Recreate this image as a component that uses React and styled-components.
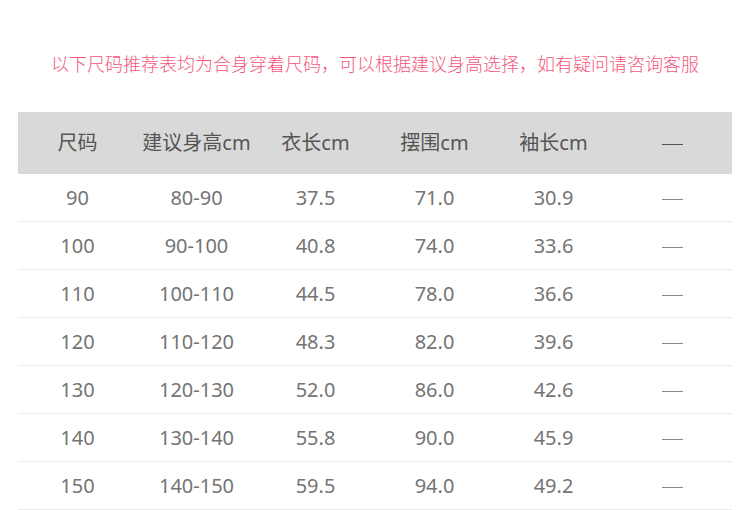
import React from "react";
import styled, { createGlobalStyle } from "styled-components";

const Global = createGlobalStyle`
  html, body { margin: 0; padding: 0; background: #fff; }
  body { font-family: "Noto Sans", "Noto Sans CJK SC", sans-serif; }
`;

const Page = styled.div`
  width: 750px;
  padding: 0 18px;
  box-sizing: border-box;
`;

const Notice = styled.div`
  padding-top: 50px;
  height: 62px;
  line-height: 26px;
  font-size: 18px;
  color: #f5567c;
  text-align: center;
  font-family: "Noto Sans CJK SC", sans-serif;
  font-weight: 300;
`;

const Table = styled.div`
  width: 714px;
`;

const Row = styled.div`
  display: grid;
  grid-template-columns: repeat(6, 1fr);
  align-items: center;
  height: ${(p) => (p.$head ? "62px" : "47px")};
  background: ${(p) => (p.$head ? "#d9d9d9" : "#fff")};
  border-bottom: ${(p) => (p.$head ? "none" : "1px solid #ececec")};
`;

const Cell = styled.div`
  text-align: center;
  font-size: 20px;
  line-height: 24px;
  color: ${(p) => (p.$head ? "#555" : "#747474")};
`;

const Dash = styled.span`
  display: inline-block;
  width: 21px;
  height: 1px;
  vertical-align: middle;
  background: ${(p) => (p.$head ? "#555" : "#888")};
`;

const headers = ["尺码", "建议身高cm", "衣长cm", "摆围cm", "袖长cm"];
const rows = [
  ["90", "80-90", "37.5", "71.0", "30.9"],
  ["100", "90-100", "40.8", "74.0", "33.6"],
  ["110", "100-110", "44.5", "78.0", "36.6"],
  ["120", "110-120", "48.3", "82.0", "39.6"],
  ["130", "120-130", "52.0", "86.0", "42.6"],
  ["140", "130-140", "55.8", "90.0", "45.9"],
  ["150", "140-150", "59.5", "94.0", "49.2"],
];

export default function App() {
  return (
    <>
      <Global />
      <Page>
        <Notice>以下尺码推荐表均为合身穿着尺码，可以根据建议身高选择，如有疑问请咨询客服</Notice>
        <Table>
          <Row $head>
            {headers.map((h) => (
              <Cell $head key={h}>{h}</Cell>
            ))}
            <Cell $head><Dash $head /></Cell>
          </Row>
          {rows.map((r) => (
            <Row key={r[0]}>
              {r.map((v, i) => (
                <Cell key={i}>{v}</Cell>
              ))}
              <Cell><Dash /></Cell>
            </Row>
          ))}
        </Table>
      </Page>
    </>
  );
}
